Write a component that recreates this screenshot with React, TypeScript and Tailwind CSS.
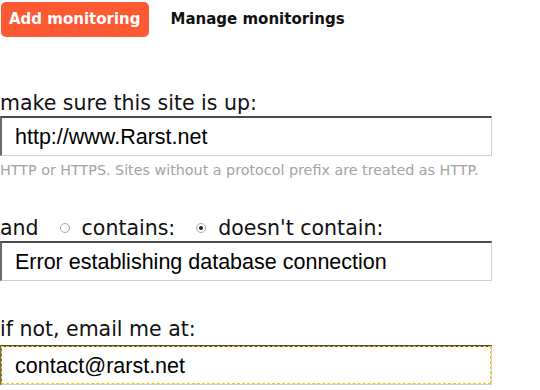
const label = "font-['DejaVu_Sans',Verdana,sans-serif] text-[20.5px] leading-[22px] text-[#111]";
const field =
  "block w-[492px] h-[40px] border-t-2 border-l-2 border-r border-b border-t-[#4a4a4a] border-l-[#6b6b6b] border-r-[#d4d0c8] border-b-[#d4d0c8] bg-white pl-[13px] pt-[1px] font-['Liberation_Sans',Arial,sans-serif] text-[21.5px] text-black";

function Radio({ checked }: { checked?: boolean }) {
  return (
    <span className="inline-flex h-[10px] w-[10px] items-center justify-center rounded-full border border-[#a8a8a8] bg-white">
      {checked && <span className="h-[4px] w-[4px] rounded-full bg-[#222]" />}
    </span>
  );
}

export default function App() {
  return (
    <div className="h-[390px] w-[540px] overflow-hidden bg-white">
      {/* Tabs */}
      <div className="flex items-center pt-[2px] pl-[1px] font-['DejaVu_Sans',Verdana,sans-serif] text-[15px] font-bold">
        <button
          type="button"
          className="h-[35px] rounded-[5px] bg-[#fd5a33] px-[8px] text-white"
        >
          Add monitoring
        </button>
        <span className="ml-[22px] text-[#111]">Manage monitorings</span>
      </div>

      {/* Site */}
      <div className={`${label} mt-[55px]`}>make sure this site is up:</div>
      <input className={`${field} mt-[2px]`} defaultValue="http://www.Rarst.net" />
      <div className="mt-[6px] font-['DejaVu_Sans',Verdana,sans-serif] text-[14.3px] leading-[16px] text-[#a3a3a3]">
        HTTP or HTTPS. Sites without a protocol prefix are treated as HTTP.
      </div>

      {/* Contains */}
      <div className={`${label} mt-[39px] flex items-center`}>
        <span>and</span>
        <span className="ml-[21px] mr-[12px] flex">
          <Radio />
        </span>
        <span>contains:</span>
        <span className="ml-[21px] mr-[12px] flex">
          <Radio checked />
        </span>
        <span>doesn't contain:</span>
      </div>
      <input className={`${field} mt-[2px]`} defaultValue="Error establishing database connection" />

      {/* Email */}
      <div className={`${label} mt-[37px]`}>if not, email me at:</div>
      <input
        className={`${field} mt-[5px] outline-1 outline-dashed outline-[#f0cc00] -outline-offset-2`}
        defaultValue="contact@rarst.net"
      />
    </div>
  );
}
